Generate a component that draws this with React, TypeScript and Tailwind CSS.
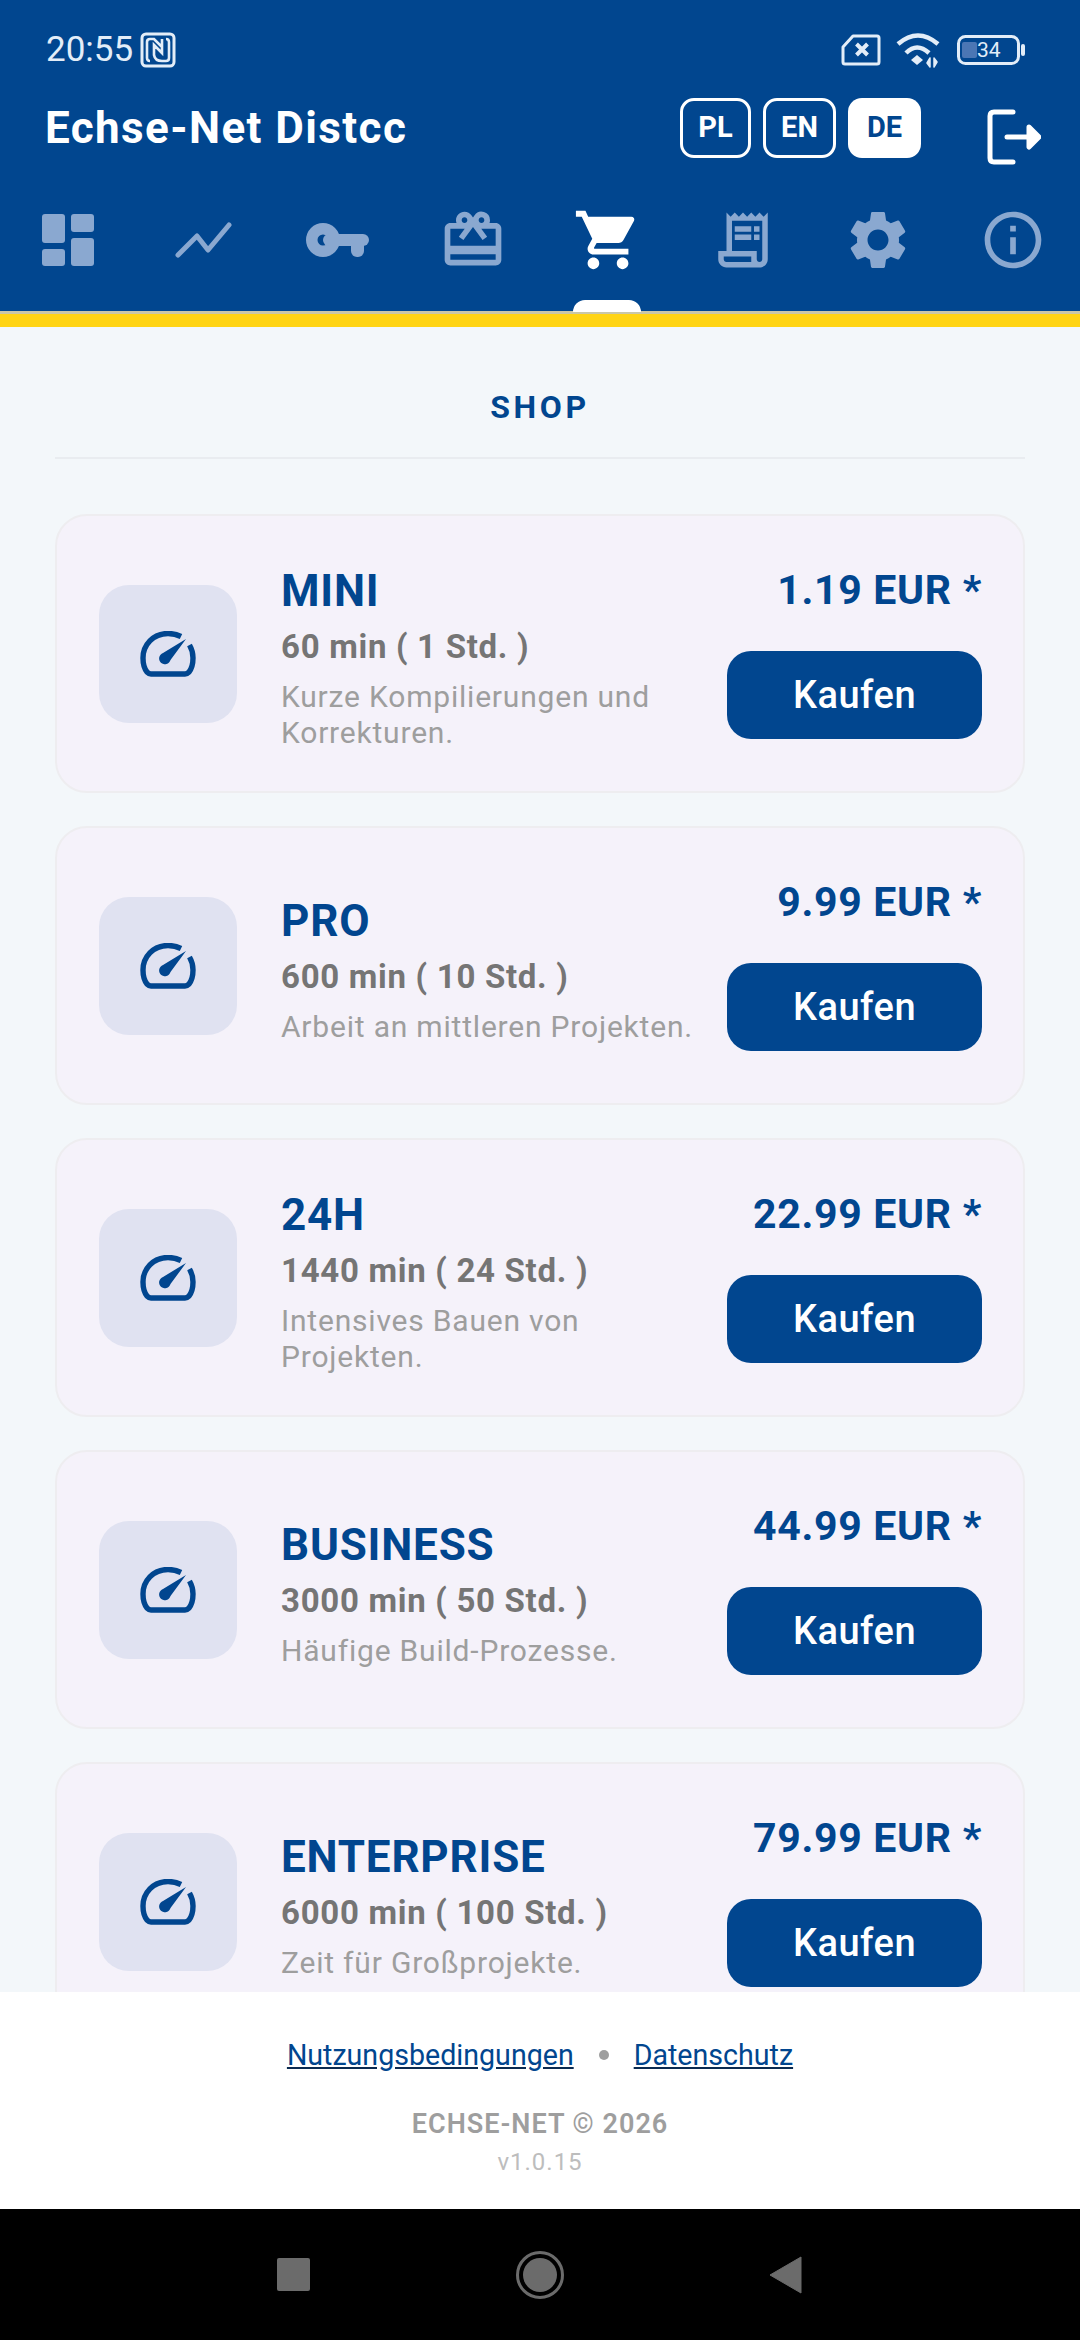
import React from 'react';
import { MdOutlineCardGiftcard, MdShoppingCart, MdOutlineReceiptLong, MdSettings, MdInfoOutline } from 'react-icons/md';

const DashboardIcon = () => (
    <svg width="52" height="52" viewBox="0 0 52 52" fill="currentColor">
        <rect x="0" y="0" width="23" height="29" rx="3" />
        <rect x="0" y="35" width="23" height="17" rx="3" />
        <rect x="29" y="0" width="23" height="18" rx="3" />
        <rect x="29" y="24" width="23" height="28" rx="3" />
    </svg>
);

const ChartIcon = () => (
    <svg width="57" height="36" viewBox="0 0 57 36" fill="none" stroke="currentColor" strokeWidth="5" strokeLinecap="round" strokeLinejoin="round" className="ml-[2px]">
        <path d="M3 33 L22 14 L33 28 L54 3" />
    </svg>
);

const KeyIcon = () => (
    <svg width="63" height="34" viewBox="0 0 63 34" fill="currentColor">
        <path fillRule="evenodd" d="M17 0 A17 17 0 1 1 17 34 A17 17 0 1 1 17 0 Z M17 11.5 A5.5 5.5 0 1 0 17 22.5 A5.5 5.5 0 1 0 17 11.5 Z" />
        <rect x="17" y="11" width="46" height="12" rx="6" />
        <rect x="45" y="11" width="13" height="23" rx="6" />
    </svg>
);

const NAV_ICONS = [
    { node: <DashboardIcon />, size: '' },
    { node: <ChartIcon />, size: '' },
    { node: <KeyIcon />, size: '' },
    { node: <MdOutlineCardGiftcard />, size: 'text-[68px]' },
    { node: <MdShoppingCart />, size: 'text-[70px]', active: true },
    { node: <MdOutlineReceiptLong />, size: 'text-[66px]' },
    { node: <MdSettings />, size: 'text-[70px]' },
    { node: <MdInfoOutline />, size: 'text-[68px]' },
];

const PACKAGES = [
    { name: 'MINI', minutes: '60 min ( 1 Std. )', desc: 'Kurze Kompilierungen und Korrekturen.', price: '1.19 EUR *' },
    { name: 'PRO', minutes: '600 min ( 10 Std. )', desc: 'Arbeit an mittleren Projekten.', price: '9.99 EUR *' },
    { name: '24H', minutes: '1440 min ( 24 Std. )', desc: 'Intensives Bauen von Projekten.', price: '22.99 EUR *' },
    { name: 'BUSINESS', minutes: '3000 min ( 50 Std. )', desc: 'Häufige Build-Prozesse.', price: '44.99 EUR *' },
    { name: 'ENTERPRISE', minutes: '6000 min ( 100 Std. )', desc: 'Zeit für Großprojekte.', price: '79.99 EUR *' },
];

const NfcIcon = () => (
    <svg width="36" height="36" viewBox="0 0 36 36" fill="none" stroke="#e3edf8" strokeWidth="3">
        <rect x="2" y="2" width="32" height="32" rx="4" />
        <path d="M10 29 Q7 29 7 26 V10 Q7 7 10 7 H14 L22 15 M26 7 Q29 7 29 10 V26 Q29 29 26 29 H22 Q15 29 14 23 V13 L22 21 V7" strokeWidth="2.6" />
    </svg>
);

const SimIcon = () => (
    <svg width="40" height="32" viewBox="0 0 40 32" fill="none" stroke="#e3edf8" strokeWidth="3">
        <path d="M12 2 H36 Q38 2 38 4 V28 Q38 30 36 30 H4 Q2 30 2 28 V13 Z" strokeLinejoin="round" />
        <path d="M15.5 10 L26.5 21 M26.5 10 L15.5 21" strokeWidth="4" />
    </svg>
);

const WifiIcon = () => (
    <svg width="48" height="36" viewBox="0 0 48 36" fill="none" stroke="#e3edf8" strokeWidth="4.5">
        <path d="M3 12 Q23 -5 43 12" />
        <path d="M11 21 Q22 10 34 21" />
        <path d="M16 28 L22 23 L28 28 L22 33 Z" fill="#e3edf8" stroke="none" />
        <path d="M35 26 V35 L32 31 Z M39 35 V26 L42 30 Z" fill="#e3edf8" stroke="#e3edf8" strokeWidth="1.5" strokeLinejoin="round" />
    </svg>
);

const BatteryIcon = () => (
    <div className="relative w-[68px] h-[30px] shrink-0">
        <svg width="68" height="30" viewBox="0 0 68 30" fill="none">
            <rect x="1.5" y="1.5" width="60" height="27" rx="7" stroke="#e3edf8" strokeWidth="3" />
            <rect x="5" y="7" width="15" height="16" rx="2" fill="#4b76b4" />
            <rect x="64" y="9" width="4" height="12" rx="2" fill="#e3edf8" />
        </svg>
        <span className="absolute left-[20px] top-0 h-[30px] leading-[31px] text-[21px] text-[#e3edf8]">34</span>
    </div>
);

const LogoutIcon = () => (
    <svg width="54" height="56" viewBox="0 0 54 56" fill="none" stroke="#ffffff" strokeWidth="5" strokeLinecap="round" strokeLinejoin="round">
        <path d="M26 3 H7 Q3 3 3 7 V49 Q3 53 7 53 H26" />
        <path d="M20 28 H46" />
        <path d="M42 18 L52 28 L42 38 Z" fill="#ffffff" />
    </svg>
);

const GaugeIcon = () => (
    <svg width="56" height="46" viewBox="0 0 56 46" fill="none" className="text-[#01468f]">
        <path d="M41 5.5 Q35 2.5 28 2.5 C13 2.5 3 14 3 27 Q3 36 7 41 Q9 43 11 43 H45 Q47 43 49 41 Q53 36 53 27 Q53 20 49.5 14" stroke="currentColor" strokeWidth="5.4" strokeLinecap="butt" />
        <path d="M46 8 L30.5 29 A5.8 5.8 0 1 1 23 22 Z" fill="currentColor" />
    </svg>
);

const PackageCard: React.FC<{ name: string; minutes: string; desc: string; price: string }> = ({ name, minutes, desc, price }) => (
    <div className="h-[279px] shrink-0 flex items-center rounded-[32px] border-2 border-[#eeedf0] bg-[#f5f2fa] pl-[42px] pr-[41px]">
        <div className="w-[138px] h-[138px] shrink-0 rounded-[30px] bg-[#e0e2f1] flex items-center justify-center">
            <GaugeIcon />
        </div>
        <div className="w-[462px] pl-[44px] pt-[7px] shrink-0">
            <div className="text-[44px] leading-[54px] font-bold tracking-[0.8px] text-[#01468f]">{name}</div>
            <div className="text-[33px] leading-[46px] font-bold tracking-[0.7px] text-[#757575] mt-[6px]">{minutes}</div>
            <div className="text-[30px] leading-[36px] tracking-[0.8px] text-[#9e9e9e] mt-[9px]">{desc}</div>
        </div>
        <div className="flex-1 flex flex-col items-end pb-[4px]">
            <div className="text-[41px] leading-[50px] font-bold tracking-[0.7px] text-[#01468f] whitespace-nowrap">{price}</div>
            <button className="mt-[36px] w-[255px] h-[88px] rounded-[24px] bg-[#01468f] text-white text-[38px] pt-[1px] tracking-[0.5px] font-medium">Kaufen</button>
        </div>
    </div>
);

export default function App() {
    return (
        <div className="w-[1080px] h-[2340px] flex flex-col overflow-hidden font-['Roboto',sans-serif] bg-[#f3f7fa]">
            <header className="h-[327px] shrink-0 bg-[#01468f] flex flex-col relative">
                <div className="h-[98px] shrink-0 flex items-center pl-[46px] pr-[55px] pt-[2px]">
                    <span className="text-[35px] text-[#e3edf8]">20:55</span>
                    <span className="ml-[7px]"><NfcIcon /></span>
                    <div className="ml-auto flex items-center">
                        <SimIcon />
                        <span className="ml-[14px]"><WifiIcon /></span>
                        <span className="ml-[14px]"><BatteryIcon /></span>
                    </div>
                </div>
                <div className="h-[60px] shrink-0 flex items-center pl-[45px]">
                    <h1 className="text-[44px] font-bold tracking-[1.4px] text-white">Echse-Net Distcc</h1>
                    <div className="ml-auto flex gap-[12px]">
                        <button className="w-[71px] h-[60px] rounded-[14px] border-[3px] border-white text-white text-[29px] font-bold">PL</button>
                        <button className="w-[73px] h-[60px] rounded-[14px] border-[3px] border-white text-white text-[29px] font-bold">EN</button>
                        <button className="w-[73px] h-[60px] rounded-[14px] bg-white text-[#01468f] text-[29px] font-bold">DE</button>
                    </div>
                    <div className="ml-[66px] mr-[39px] mt-[18px]"><LogoutIcon /></div>
                </div>
                <nav className="grid grid-cols-8 mt-[47px]">
                    {NAV_ICONS.map(({ node, size, active }, i) => (
                        <div key={i} className={`h-[70px] flex items-center justify-center ${size} ${active ? 'text-white' : 'text-[#8aa8d0]'}`}>
                            {node}
                        </div>
                    ))}
                </nav>
                <div className="absolute left-0 right-0 bottom-0 h-[16px] bg-[#ffd414] border-t-[3px] border-[#c9c7a8]" />
                <div className="absolute left-[573px] bottom-[15px] w-[68px] h-[12px] rounded-t-[12px] bg-white" />
            </header>

            <main className="flex-1 min-h-0 overflow-hidden px-[55px]">
                <div className="h-[132px] pt-[30px] flex items-center justify-center border-b-2 border-[#e9ecf0]">
                    <h2 className="text-[32px] font-bold tracking-[3.6px] text-[#01468f]">SHOP</h2>
                </div>
                <div className="flex flex-col gap-[33px] mt-[55px]">
                    {PACKAGES.map(p => <PackageCard key={p.name} {...p} />)}
                </div>
            </main>

            <footer className="h-[217px] shrink-0 bg-white flex flex-col items-center">
                <div className="flex items-center mt-[43px] text-[28.6px] leading-[40px] text-[#01468f]">
                    <a className="underline decoration-[#0a2a50]">Nutzungsbedingungen</a>
                    <span className="w-[10px] h-[10px] rounded-full bg-[#9e9e9e] mx-[25px]" />
                    <a className="underline decoration-[#0a2a50]">Datenschutz</a>
                </div>
                <div className="mt-[33px] text-[27px] leading-[32px] font-semibold tracking-[1px] text-[#9e9e9e]">ECHSE-NET © 2026</div>
                <div className="mt-[8px] text-[24px] leading-[28px] tracking-[1px] text-[#bdbdbd]">v1.0.15</div>
            </footer>

            <div className="h-[131px] shrink-0 bg-black flex items-center justify-center relative">
                <div className="flex items-center w-[526px] justify-between">
                    <div className="w-[33px] h-[33px] rounded-[2px] bg-[#6b6b6b]" />
                    <div className="w-[48px] h-[48px] rounded-full border-[3px] border-[#6b6b6b] flex items-center justify-center">
                        <div className="w-[34px] h-[34px] rounded-full bg-[#6b6b6b]" />
                    </div>
                    <svg width="34" height="38" viewBox="0 0 34 38"><path d="M32 1 V37 L1 19 Z" fill="#6b6b6b" stroke="#6b6b6b" strokeLinejoin="round" /></svg>
                </div>
            </div>
        </div>
    );
}
